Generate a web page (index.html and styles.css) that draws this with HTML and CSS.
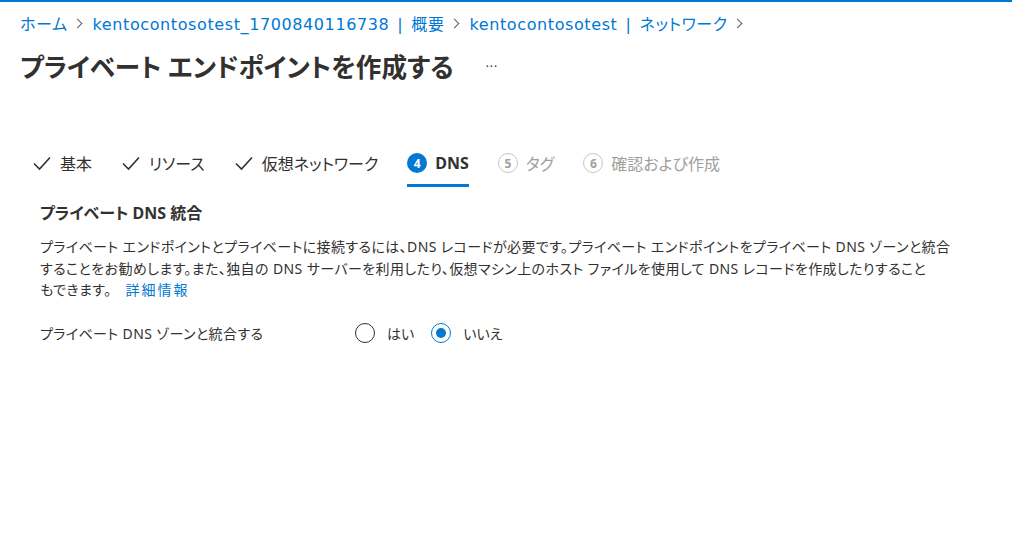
FILE: index.html
```html
<!DOCTYPE html>
<html lang="ja">
<head>
    <meta charset="UTF-8">
    <title>プライベート エンドポイントを作成する</title>
    <link rel="stylesheet" href="styles.css">
</head>
<body>
    <div class="trang">
        <nav class="breadcrumb">
            <a href="#">ホーム</a><span class="chevron"></span>
            <a href="#">kentocontosotest_1700840116738<span class="sep">|</span>概要</a><span class="chevron"></span>
            <a href="#">kentocontosotest<span class="sep">|</span>ネットワーク</a><span class="chevron"></span>
        </nav>
        <div class="tieu-de">
            <h1>プライベート エンドポイントを作成する</h1>
            <span class="more">···</span>
        </div>

        <ul class="tabs">
            <li class="tab done">
                <svg width="20" height="20" viewBox="0 0 20 20"><path d="M2 10.5 L7.5 16 L18 4.5" fill="none" stroke="#323130" stroke-width="1.6"/></svg>
                <span>基本</span>
            </li>
            <li class="tab done">
                <svg width="20" height="20" viewBox="0 0 20 20"><path d="M2 10.5 L7.5 16 L18 4.5" fill="none" stroke="#323130" stroke-width="1.6"/></svg>
                <span>リソース</span>
            </li>
            <li class="tab done">
                <svg width="20" height="20" viewBox="0 0 20 20"><path d="M2 10.5 L7.5 16 L18 4.5" fill="none" stroke="#323130" stroke-width="1.6"/></svg>
                <span>仮想ネットワーク</span>
            </li>
            <li class="tab active">
                <span class="so">4</span>
                <span>DNS</span>
            </li>
            <li class="tab disabled">
                <span class="so">5</span>
                <span>タグ</span>
            </li>
            <li class="tab disabled">
                <span class="so">6</span>
                <span>確認および作成</span>
            </li>
        </ul>

        <div class="noi-dung">
            <h2>プライベート DNS 統合</h2>
            <p class="mo-ta">プライベート エンドポイントとプライベートに接続するには、DNS レコードが必要です。プライベート エンドポイントをプライベート DNS ゾーンと統合<br>することをお勧めします。また、独自の DNS サーバーを利用したり、仮想マシン上のホスト ファイルを使用して DNS レコードを作成したりすること<br>もできます。 <a href="#" class="link">詳細情報</a></p>

            <div class="hang">
                <label class="nhan">プライベート DNS ゾーンと統合する</label>
                <div class="radio-nhom">
                    <label class="radio"><span class="vong"></span>はい</label>
                    <label class="radio checked"><span class="vong"></span>いいえ</label>
                </div>
            </div>
        </div>
    </div>
</body>
</html>
```

FILE: styles.css
```css
*{
    box-sizing: border-box;
    padding: 0;
    margin: 0;
}
body{
    font-family: "Noto Sans", "Noto Sans CJK JP", sans-serif;
    font-feature-settings: "palt";
    color: #323130;
    background: #fff;
    border-top: 2px solid #0078d4;
}
a{
    color: #0078d4;
    text-decoration: none;
}
.trang{
    padding: 0 20px;
}
.breadcrumb{
    display: flex;
    align-items: center;
    height: 42px;
    font-family: "DejaVu Sans", "Noto Sans CJK JP", sans-serif;
    font-size: 16px;
    letter-spacing: 0.6px;
}
.breadcrumb .sep{
    margin: 0 8px;
}
.breadcrumb .chevron{
    width: 7px;
    height: 7px;
    border-top: 1px solid #605e5c;
    border-right: 1px solid #605e5c;
    transform: rotate(45deg);
    margin: 0 12px 0 6px;
}
.tieu-de{
    display: flex;
    align-items: center;
    height: 44px;
}
.tieu-de h1{
    font-size: 25.6px;
    font-weight: 700;
}
.tieu-de .more{
    margin-left: 32px;
    font-size: 12px;
    color: #323130;
    letter-spacing: 1px;
}
.tabs{
    list-style: none;
    display: flex;
    gap: 29px;
    margin-top: 57px;
    padding-left: 12px;
}
.tab{
    display: flex;
    align-items: center;
    gap: 8px;
    font-size: 16px;
    padding: 6px 0 9px;
    border-bottom: 3px solid transparent;
}
.tab .so{
    width: 20px;
    height: 20px;
    border-radius: 50%;
    font-size: 12px;
    font-weight: 700;
    display: flex;
    align-items: center;
    justify-content: center;
}
.tab.active{
    border-bottom-color: #0078d4;
    font-weight: 700;
}
.tab.active .so{
    background: #0078d4;
    color: #fff;
}
.tab.disabled{
    color: #a19f9d;
}
.tab.disabled .so{
    border: 1px solid #c8c6c4;
    color: #a19f9d;
}
.noi-dung{
    padding-left: 20px;
}
.noi-dung h2{
    font-size: 16px;
    font-weight: 700;
    margin-top: 13px;
}
.mo-ta{
    font-size: 14px;
    line-height: 21.5px;
    margin-top: 12px;
    letter-spacing: 0.4px;
}
.mo-ta .link{
    margin-left: 10px;
    letter-spacing: 2px;
}
.hang{
    display: flex;
    align-items: center;
    margin-top: 22px;
}
.nhan{
    width: 315px;
    font-size: 14px;
    letter-spacing: 0.4px;
}
.radio-nhom{
    display: flex;
    gap: 17px;
}
.radio{
    display: flex;
    align-items: center;
    gap: 12px;
    font-size: 14px;
}
.vong{
    width: 20px;
    height: 20px;
    border-radius: 50%;
    border: 1px solid #323130;
    display: flex;
    align-items: center;
    justify-content: center;
}
.radio.checked .vong{
    border-color: #0078d4;
}
.radio.checked .vong::after{
    content: "";
    width: 10px;
    height: 10px;
    border-radius: 50%;
    background: #0078d4;
}
```
